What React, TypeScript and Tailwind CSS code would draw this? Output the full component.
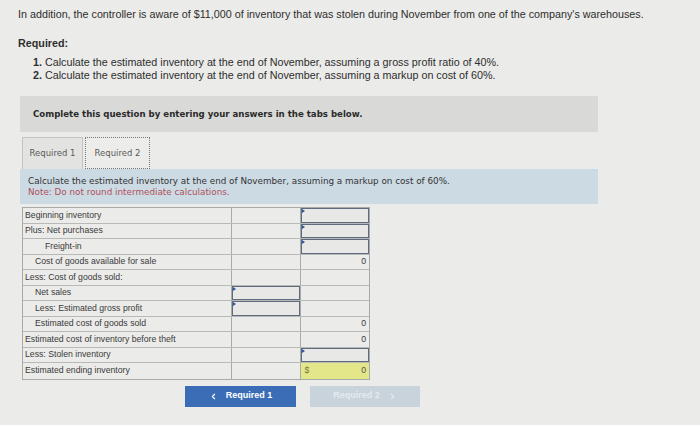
import { ChevronLeft, ChevronRight } from 'lucide-react';

type Row = {
  label: string;
  indent: 'none' | 'sm' | 'lg';
  mid?: 'input';
  right?: 'input' | 'zero' | 'total';
};

const rows: Row[] = [
  { label: 'Beginning inventory', indent: 'none', right: 'input' },
  { label: 'Plus: Net purchases', indent: 'none', right: 'input' },
  { label: 'Freight-in', indent: 'lg', right: 'input' },
  { label: 'Cost of goods available for sale', indent: 'sm', right: 'zero' },
  { label: 'Less: Cost of goods sold:', indent: 'none' },
  { label: 'Net sales', indent: 'sm', mid: 'input' },
  { label: 'Less: Estimated gross profit', indent: 'sm', mid: 'input' },
  { label: 'Estimated cost of goods sold', indent: 'sm', right: 'zero' },
  { label: 'Estimated cost of inventory before theft', indent: 'none', right: 'zero' },
  { label: 'Less: Stolen inventory', indent: 'none', right: 'input' },
  { label: 'Estimated ending inventory', indent: 'none', right: 'total' },
];

function InputCell() {
  return (
    <div className="relative h-full w-full border-[1.5px] border-[#5f6b7d] bg-[#e8e8e6]">
      <span className="absolute left-0 top-0 h-0 w-0 border-y-[2.5px] border-l-[3.5px] border-y-transparent border-l-[#3158a6]" />
    </div>
  );
}

function Cell({ kind }: { kind?: Row['right'] }) {
  if (kind === 'input') return <InputCell />;
  if (kind === 'zero')
    return <div className="flex h-full items-center justify-end pr-[3px] text-[8.7px]">0</div>;
  if (kind === 'total')
    return (
      <div className="flex h-full items-center justify-between bg-[#e4e68a] px-[3px] text-[8.7px] text-[#555]">
        <span className="text-[#7a7a40]">$</span>
        <span>0</span>
      </div>
    );
  return null;
}

export default function App() {
  return (
    <div className="h-[425px] w-[700px] overflow-hidden bg-[#ebebe9] font-['Liberation_Sans',Arial,sans-serif] text-[#2e2e2e]">
      <div className="px-[18px] pt-[8px]">
        <p className="text-[10.75px] leading-[13px]">
          In addition, the controller is aware of $11,000 of inventory that was stolen during November from one of the company's warehouses.
        </p>
        <p className="mt-[16px] text-[10.75px] font-bold leading-[13px]">Required:</p>
        <ol className="mt-[6px] pl-[15px] text-[10.75px] leading-[13px]">
          <li>
            <b>1.</b> Calculate the estimated inventory at the end of November, assuming a gross profit ratio of 40%.
          </li>
          <li>
            <b>2.</b> Calculate the estimated inventory at the end of November, assuming a markup on cost of 60%.
          </li>
        </ol>
      </div>

      <div className="ml-[20px] mt-[14px] flex h-[36px] w-[578px] items-center bg-[#d9d9d7] pl-[13px] font-['DejaVu_Sans',Verdana,sans-serif] text-[8.6px] font-bold text-[#2a2a2a]">
        Complete this question by entering your answers in the tabs below.
      </div>

      <div className="ml-[22px] mt-[5px] flex h-[32px] gap-[2px] font-['DejaVu_Sans',Verdana,sans-serif] text-[8.5px] text-[#5a5a5a]">
        <div className="flex w-[61px] items-center justify-center border border-b-0 border-[#c4c4c2] bg-[#e3e3e1]">
          Required 1
        </div>
        <div className="flex w-[65px] items-center justify-center border border-dotted border-[#777] bg-[#ececea]">
          Required 2
        </div>
      </div>

      <div className="ml-[20px] h-[35px] w-[578px] bg-[#ccdae4] pl-[8px] pt-[7px] font-['DejaVu_Sans',Verdana,sans-serif] text-[8.8px] leading-[11px]">
        <p className="text-[#333]">
          Calculate the estimated inventory at the end of November, assuming a markup on cost of 60%.
        </p>
        <p className="text-[#b0505a]">Note: Do not round intermediate calculations.</p>
      </div>

      <div className="ml-[22px] mt-[3px] w-[348px] border border-[#a9a9a7] text-[8.7px] text-[#3a3a3a]">
        {rows.map((r) => (
          <div key={r.label} className="flex h-[15.5px] border-b border-[#b9b9b7] last:border-b-0">
            <div
              className={`flex w-[210px] items-center border-r border-[#a9a9a7] ${
                r.indent === 'lg' ? 'pl-[22px]' : r.indent === 'sm' ? 'pl-[12px]' : 'pl-[2px]'
              }`}
            >
              {r.label}
            </div>
            <div className="w-[70px] border-r border-[#a9a9a7]">{r.mid === 'input' && <InputCell />}</div>
            <div className="w-[68px]">
              <Cell kind={r.right} />
            </div>
          </div>
        ))}
      </div>

      <div className="ml-[185px] mt-[6px] flex gap-[14px] text-[9px] font-bold">
        <div className="flex h-[21px] w-[111px] items-center justify-center gap-[8px] bg-[#3b6db6] text-white">
          <ChevronLeft size={9} strokeWidth={3} />
          Required 1
        </div>
        <div className="flex h-[21px] w-[110px] items-center justify-center gap-[8px] bg-[#c9d3dc] text-[#e5eaef]">
          Required 2
          <ChevronRight size={9} strokeWidth={3} />
        </div>
      </div>
    </div>
  );
}
